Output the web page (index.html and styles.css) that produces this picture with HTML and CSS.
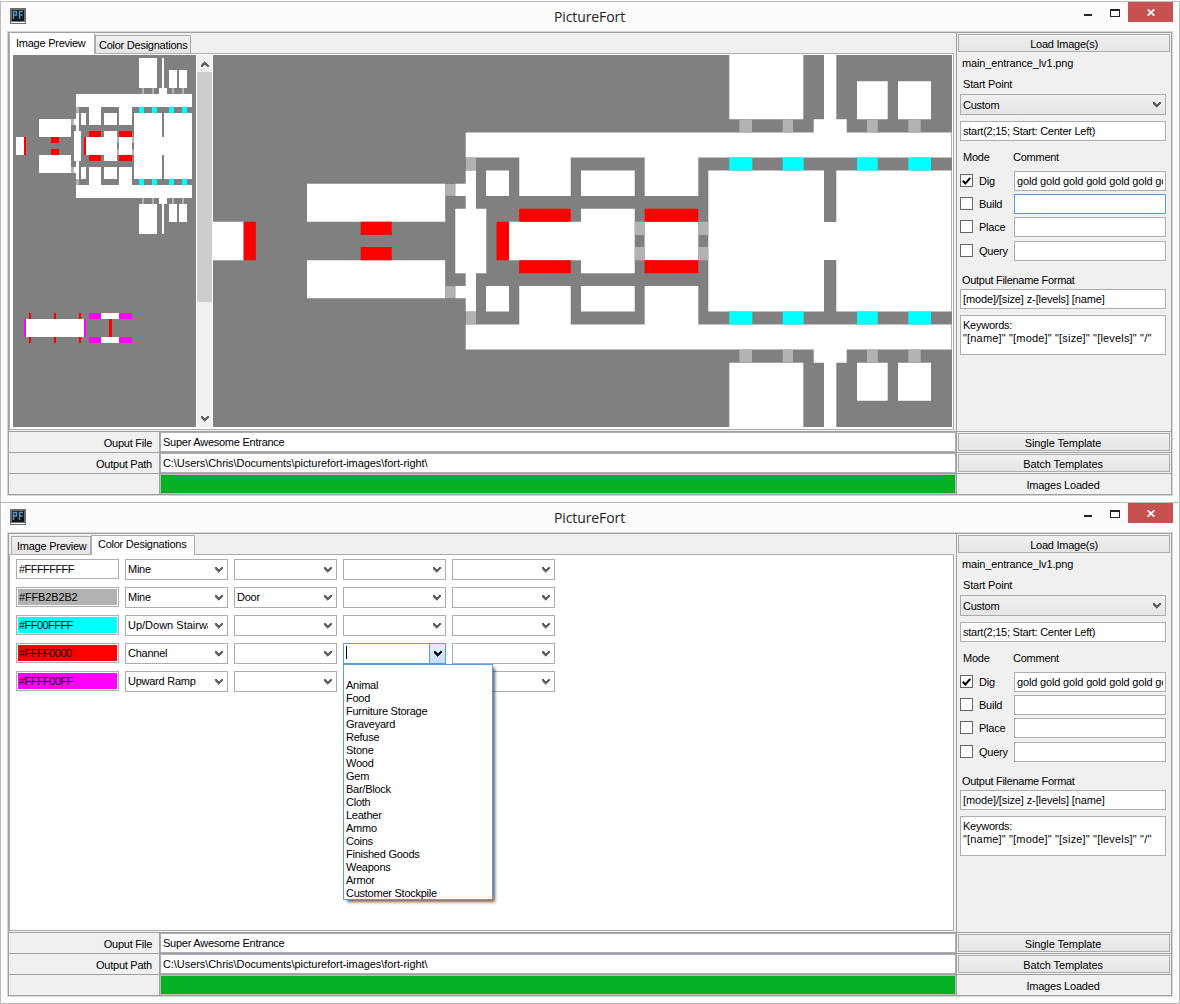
FILE: index.html
```html
<!DOCTYPE html>
<html lang="en">
<head>
<meta charset="utf-8">
<title>PictureFort</title>
<link rel="stylesheet" href="styles.css">
</head>
<body>
<svg class="defs" width="0" height="0">
  <symbol id="chev" viewBox="0 0 8 6"><path d="M0 0h2v1h1v1h2v-1h1v-1h2v2h-1v1h-1v1h-1v1h-1v1h-.5v-1h-1v-1h-1v-1h-1v-1h-.5z"/></symbol>
  <symbol id="logo" viewBox="0 0 16 16"><path d="M0 0h16v16H0z" fill="#6d6d6d"/><path d="M2 2h12v11H2z" fill="#10181f"/><path d="M1 14h14v1H1z" fill="#fff"/><path d="M3.500 11V3.500h3V7h-3M9.500 11V3.500H13M9.500 7H12.500" fill="none" stroke="#5c93b8" stroke-width="1.400"/></symbol>
  <symbol id="min" viewBox="0 0 8 2"><path d="M0 0h8v2H0z"/></symbol>
  <symbol id="max" viewBox="0 0 10 8"><path d="M0 0h10v8H0zM1 2v5h8V2z" fill-rule="evenodd"/></symbol>
  <symbol id="x" viewBox="0 0 8 7"><path d="M.7.3 7.300 6.700M7.300.3.700 6.700" stroke="#fff" stroke-width="1.700"/></symbol>
  <symbol id="tick" viewBox="0 0 9 8"><path d="M.8 3.800 3.300 6.500 8.300.8" fill="none" stroke="#000" stroke-width="2"/></symbol>
</svg>

<section class="window">
  <header class="titlebar">
    <svg class="logo"><use href="#logo"/></svg>
    <h1 class="title">PictureFort</h1>
    <div class="controls"><svg class="c-min"><use href="#min"/></svg><svg class="c-max"><use href="#max"/></svg><span class="close"><svg><use href="#x"/></svg></span></div>
  </header>
  <main class="client">
    <div class="tabs-cell">
      <nav class="tabs tabs-first"><span class="tab on">Image Preview</span><span class="tab">Color Designations</span></nav>
      <div class="panel preview">
        <svg class="thumb" viewBox="13 55 183 372" shape-rendering="crispEdges">
          <path fill="#808080" d="M13 55h183v372H13z"/>
          <g id="smallhalf">
            <path fill="#fff" d="M139 58h18v30h-18zM162 58h2v30h-2zM159 88h8v6h-8zM169 70h8v18h-8zM179 70h8v18h-8zM76 94h116v13H76zM89 107h12v18H89zM119 107h13v18h-13zM76 113h3v18h-3zM74 119h2v6h-2zM81 113h5v12h-5zM104 113h13v12h-13zM134 113h28v33h-28zM164 113h28v33h-28zM162 137h2v9h-2zM74 131h7v15h-7zM86 137h18v9H86zM104 131h13v15h-13zM119 137h13v9h-13zM39 119h32v18H39zM16 137h8v9h-8z"/>
            <path fill="#b2b2b2" d="M142 88h2v6h-2zM152 88h2v6h-2zM172 88h2v6h-2zM182 88h2v6h-2zM76 107h3v6h-3zM71 119h3v6h-3zM117 137h2v6h-2zM132 137h2v6h-2z"/>
            <path fill="#0ff" d="M139 107h5v6h-5zM152 107h5v6h-5zM169 107h5v6h-5zM182 107h5v6h-5z"/>
            <path fill="#f00" d="M89 131h12v6H89zM119 131h13v6h-13zM84 137h2v9h-2zM24 137h2v9h-2zM51 137h8v6h-8z"/>
          </g>
          <use href="#smallhalf" transform="matrix(1 0 0 -1 0 292)"/>
          <path fill="#fff" d="M26 319h58v18H26zM101 313h18v6h-18zM101 337h18v6h-18z"/>
          <path fill="#f0f" d="M24 319h2v18h-2zM84 319h2v18h-2zM89 313h12v6H89zM119 313h13v6h-13zM89 337h12v6H89zM119 337h13v6h-13z"/>
          <path fill="#f00" d="M29 313h2v6h-2zM54 313h2v6h-2zM79 313h2v6h-2zM29 337h2v6h-2zM54 337h2v6h-2zM79 337h2v6h-2zM109 319h3v18h-3z"/>
        </svg>
        <div class="scroll"><svg class="chev up"><use href="#chev"/></svg><span class="grip"></span><svg class="chev"><use href="#chev"/></svg></div>
        <svg class="big" viewBox="213 55 739 372">
          <path fill="#808080" d="M213 55h739v372H213z"/>
          <g id="bighalf">
            <path fill="#fff" d="M729.300 54h74v65.300h-74zM824 54h12.300v66H824zM813.700 119.300h33V133h-33zM857 81.300h30.700v38H857zM898 81.300h33v38h-33zM465.700 132.500H952v25H465.700zM519.300 157h51.400v39h-51.400zM644.700 157h53.600v39h-53.600zM465.700 170.500H476V209h-10.300zM455.300 183.700h11V196h-11zM455.300 208.700H486.300V241h-31zM486 170.500h23V196h-23zM581 170.500h53.700V196H581zM708.300 170.500H824V241H708.300zM836.300 170.500H952V241H836.300zM823.500 222h13.300v19h-13.300zM508.900 221.700h73V241h-73zM581 208.700h53.700V241H581zM644.600 221.700h53.700V241h-53.700zM307 183.700h138.200v38H307zM212 221.700h31.700V241H212z"/>
            <path fill="#b2b2b2" d="M739.300 119.600H752v12.800h-12.700zM782.700 119.600H793v12.800h-10.300zM867 119.600h10.700v12.800H867zM908.300 119.600h12.400v12.800h-12.400zM466 157.800h10v12.400h-10zM445.300 184h10v11.700h-10zM634.700 221.700h10V235h-10zM698.300 221.700h10V235h-10z"/>
            <path fill="#0ff" d="M729.300 157.600h23v12.800h-23zM782.700 157.600h21v12.800h-21zM857 157.600h20.700v12.800H857zM908.300 157.600H931v12.800h-22.700z"/>
            <path fill="#f00" d="M519.200 208.700h51.500v13h-51.500zM644.600 208.700h53.700v13h-53.700zM496.500 221.700H509V241h-12.500zM243.600 221.700h12.200V241h-12.200zM360.700 221.700h31V235h-31z"/>
          </g>
          <use href="#bighalf" transform="matrix(1 0 0 -1 0 482)"/>
          <path fill="#b0b0b0" d="M951 132.500h1v25h-1zM951 170.500h1v141h-1zM951 324.500h1v25h-1z"/>
        </svg>
      </div>
    </div>
    <aside class="side">
      <button class="btn load">Load Image(s)</button>
      <p class="file">main_entrance_lv1.png</p>
      <p class="lbl start">Start Point</p>
      <div class="select">Custom<svg class="chev"><use href="#chev"/></svg></div>
      <div class="field point">start(2;15; Start: Center Left)</div>
      <p class="lbl heads"><span>Mode</span><span>Comment</span></p>
      <div class="modes">
        <div class="mode"><i class="check"><svg><use href="#tick"/></svg></i><span class="name">Dig</span><div class="field gold"><span>gold gold gold gold gold gold gold</span></div></div>
        <div class="mode"><i class="check"></i><span class="name">Build</span><div class="field focus"></div></div>
        <div class="mode"><i class="check"></i><span class="name">Place</span><div class="field"></div></div>
        <div class="mode last"><i class="check"></i><span class="name">Query</span><div class="field"></div></div>
      </div>
      <p class="lbl fmt">Output Filename Format</p>
      <div class="field format">[mode]/[size] z-[levels] [name]</div>
      <div class="area">Keywords:<br><span class="keys">"[name]" "[mode]" "[size]" "[levels]" "/"</span></div>
    </aside>
    <div class="cell label">Ouput File</div><div class="cell input out1">Super Awesome Entrance</div><div class="cell"><button class="btn">Single Template</button></div>
    <div class="cell label">Output Path</div><div class="cell input out2">C:\Users\Chris\Documents\picturefort-images\fort-right\</div><div class="cell"><button class="btn">Batch Templates</button></div>
    <div class="cell"></div><div class="cell progress"></div><div class="cell status">Images Loaded</div>
  </main>
</section>

<section class="window bottom">
  <header class="titlebar">
    <svg class="logo"><use href="#logo"/></svg>
    <h1 class="title">PictureFort</h1>
    <div class="controls"><svg class="c-min"><use href="#min"/></svg><svg class="c-max"><use href="#max"/></svg><span class="close"><svg><use href="#x"/></svg></span></div>
  </header>
  <main class="client">
    <div class="tabs-cell">
      <nav class="tabs tabs-second"><span class="tab">Image Preview</span><span class="tab on">Color Designations</span></nav>
      <div class="panel colors">
        <div class="hex white">#FFFFFFFF</div><div class="combo"><span>Mine</span><svg class="chev"><use href="#chev"/></svg></div><div class="combo"><svg class="chev"><use href="#chev"/></svg></div><div class="combo"><svg class="chev"><use href="#chev"/></svg></div><div class="combo"><svg class="chev"><use href="#chev"/></svg></div>
        <div class="hex grey">#FFB2B2B2</div><div class="combo"><span>Mine</span><svg class="chev"><use href="#chev"/></svg></div><div class="combo"><span>Door</span><svg class="chev"><use href="#chev"/></svg></div><div class="combo"><svg class="chev"><use href="#chev"/></svg></div><div class="combo"><svg class="chev"><use href="#chev"/></svg></div>
        <div class="hex cyan">#FF00FFFF</div><div class="combo"><span class="stair">Up/Down Stairway</span><svg class="chev"><use href="#chev"/></svg></div><div class="combo"><svg class="chev"><use href="#chev"/></svg></div><div class="combo"><svg class="chev"><use href="#chev"/></svg></div><div class="combo"><svg class="chev"><use href="#chev"/></svg></div>
        <div class="hex red">#FFFF0000</div><div class="combo"><span>Channel</span><svg class="chev"><use href="#chev"/></svg></div><div class="combo"><svg class="chev"><use href="#chev"/></svg></div>
        <div class="combo open"><i class="caret"></i><b class="drop"><svg class="chev"><use href="#chev"/></svg></b>
          <ul class="menu"><li></li><li>Animal</li><li>Food</li><li>Furniture Storage</li><li>Graveyard</li><li>Refuse</li><li>Stone</li><li>Wood</li><li>Gem</li><li>Bar/Block</li><li>Cloth</li><li>Leather</li><li>Ammo</li><li>Coins</li><li>Finished Goods</li><li>Weapons</li><li>Armor</li><li>Customer Stockpile</li></ul>
        </div><div class="combo"><svg class="chev"><use href="#chev"/></svg></div>
        <div class="hex magenta">#FFFF00FF</div><div class="combo"><span>Upward Ramp</span><svg class="chev"><use href="#chev"/></svg></div><div class="combo"><svg class="chev"><use href="#chev"/></svg></div><div class="combo"><svg class="chev"><use href="#chev"/></svg></div><div class="combo"><svg class="chev"><use href="#chev"/></svg></div>
      </div>
    </div>
    <aside class="side">
      <button class="btn load">Load Image(s)</button>
      <p class="file">main_entrance_lv1.png</p>
      <p class="lbl start">Start Point</p>
      <div class="select">Custom<svg class="chev"><use href="#chev"/></svg></div>
      <div class="field point">start(2;15; Start: Center Left)</div>
      <p class="lbl heads"><span>Mode</span><span>Comment</span></p>
      <div class="modes">
        <div class="mode"><i class="check"><svg><use href="#tick"/></svg></i><span class="name">Dig</span><div class="field gold"><span>gold gold gold gold gold gold gold</span></div></div>
        <div class="mode"><i class="check"></i><span class="name">Build</span><div class="field"></div></div>
        <div class="mode"><i class="check"></i><span class="name">Place</span><div class="field"></div></div>
        <div class="mode last"><i class="check"></i><span class="name">Query</span><div class="field"></div></div>
      </div>
      <p class="lbl fmt">Output Filename Format</p>
      <div class="field format">[mode]/[size] z-[levels] [name]</div>
      <div class="area">Keywords:<br><span class="keys">"[name]" "[mode]" "[size]" "[levels]" "/"</span></div>
    </aside>
    <div class="cell label">Ouput File</div><div class="cell input out1">Super Awesome Entrance</div><div class="cell"><button class="btn">Single Template</button></div>
    <div class="cell label">Output Path</div><div class="cell input out2">C:\Users\Chris\Documents\picturefort-images\fort-right\</div><div class="cell"><button class="btn">Batch Templates</button></div>
    <div class="cell"></div><div class="cell progress"></div><div class="cell status">Images Loaded</div>
  </main>
</section>
</body>
</html>
```

FILE: styles.css
```css
* { box-sizing: border-box; margin: 0; padding: 0; }
html { background: #fff; }
body { width: 1180px; padding-top: 1px; font: 11px/13px "Liberation Sans", Arial, sans-serif; letter-spacing: -.25px; color: #000; overflow: hidden; }
svg { display: block; flex: none; }
.defs { position: absolute; }
.window { height: 501px; background: #fcfcfc; border: 1px solid #bbb; border-bottom: 0; padding: 0 6px; }
.window.bottom { height: 502px; border-bottom: 1px solid #bbb; }

.titlebar { display: grid; grid-template-columns: 1fr auto 1fr; height: 29px; padding-left: 3px; }
.logo { width: 16px; height: 16px; margin-top: 6px; }
.title { font: 400 14px/19px "Open Sans", sans-serif; letter-spacing: -.1px; margin: 5px 4px 0 0; color: #222; }
.controls { display: flex; justify-content: flex-end; }
.c-min { width: 8px; height: 2px; margin: 12px 18px 0 0; fill: #222; }
.c-max { width: 10px; height: 8px; margin: 7px 8px 0 0; fill: #222; }
.close { width: 45px; height: 20px; background: #c75050; display: flex; align-items: center; justify-content: center; padding-top: 1px; }
.close svg { width: 8px; height: 7px; }

.client { display: grid; grid-template: 398px repeat(3, 20px) / 150px 796px 214px; gap: 1px; width: 1166px; height: 465px; padding: 1px; border: 1px solid #d6d6d6; background: #a0a0a0; }
.tabs-cell { grid-column: span 2; background: #f0f0f0; }
.tabs { display: flex; height: 21px; align-items: flex-end; margin-bottom: -1px; }
.tab { position: relative; height: 19px; border: 1px solid #acacac; background: linear-gradient(#f0f0f0, #e5e5e5); padding: 3px 0 0 3px; white-space: nowrap; }
.tab.on { height: 20px; background: #fff; border-bottom: 0; padding-top: 2px; }
.tabs-first .on { width: 86px; padding: 3px 0 0 6px; height: 21px; border-top-color: #fff; }
.tabs-first .tab:last-child { width: 96px; }
.tabs-second .tab:first-child { margin-left: 2px; width: 80px; padding-left: 5px; }
.tabs-second .on { width: 104px; padding-left: 6px; }
.panel { width: 945px; height: 377px; background: #fff; border: 1px solid #acacac; }

.preview { display: flex; gap: 1px; padding: 1px 1px 2px 3px; }
.thumb { width: 183px; height: 372px; }
.big { width: 739px; height: 372px; }
.scroll { width: 15px; height: 372px; background: #f0f0f0; display: flex; flex-direction: column; align-items: center; }
.grip { width: 15px; height: 230px; background: #cdcdcd; margin: 5px 0 114px; }
.chev { width: 8px; height: 6px; fill: #606060; }
.chev.up { transform: scaleY(-1); margin-top: 6px; }

.colors { display: grid; grid-template-columns: repeat(5, 103px); grid-auto-rows: 21px; gap: 7px 6px; align-content: start; padding: 4px 6px; }
.hex { height: 20px; border: 1px solid #abadb3; background: #fff content-box; padding: 1px; line-height: 16px; text-indent: 1px; letter-spacing: -.55px; }
.hex.grey { background-color: #b2b2b2; letter-spacing: -.15px; }
.hex.cyan { background-color: #0ff; }
.hex.red { background-color: #f00; }
.hex.magenta { background-color: #f0f; }
.combo { position: relative; display: flex; align-items: center; border: 1px solid #acacac; background: #fff; padding: 0 4px 0 2px; }
.combo span { width: 80px; overflow: hidden; white-space: nowrap; }
.combo .stair { letter-spacing: 0; }
.combo > .chev { margin-left: auto; }
.combo.open { border-color: #569de5; padding: 0; }
.caret { width: 1px; height: 13px; margin: -2px 0 0 2px; background: #000; }
.drop { display: flex; align-items: center; justify-content: center; width: 16px; height: 19px; margin-left: auto; border-left: 1px solid #569de5; background: linear-gradient(#e3f0fc, #c4dffa); }
.drop .chev { fill: #000; }
.menu { position: absolute; z-index: 2; left: -1px; top: 20px; width: 150px; height: 236px; list-style: none; background: #fff; border: 1px solid #569de5; padding-left: 2px; box-shadow: 3px 3px 3px -1px #0009; }
.menu li { height: 13px; line-height: 14px; }

.side { background: #f0f0f0; padding: 1px 4px 0 3px; }
.btn { display: block; width: 212px; height: 18px; overflow: hidden; border: 1px solid #acacac; background: linear-gradient(#f0f0f0, #e5e5e5); font: inherit; letter-spacing: -.1px; line-height: 18px; color: #000; text-align: center; padding-right: 2px; }
.btn.load { letter-spacing: -.25px; margin-left: -2px; padding-right: 0; }
.cell .btn { margin: 1px; }
.file { margin: 5px 0 0 2px; letter-spacing: -.15px; }
.lbl { padding-left: 3px; }
.start { margin-top: 8px; letter-spacing: -.2px; }
.select { display: flex; justify-content: space-between; align-items: center; width: 206px; height: 21px; margin-top: 3px; padding: 1px 4px 0 2px; border: 1px solid #acacac; background: linear-gradient(#f0f0f0, #e5e5e5); }
.field { height: 20px; border: 1px solid #abadb3; background: #fff; padding-left: 2px; line-height: 18px; white-space: nowrap; overflow: hidden; }
.field.focus { border-color: #569de5; }
.point { width: 206px; margin-top: 6px; }
.heads { display: grid; grid-template-columns: 50px 1fr; margin: 10px 0 7px; }
.modes { display: grid; gap: 3px; }
.mode { display: grid; grid-template-columns: 19px 35px 152px; align-items: center; }
.mode.last { margin-top: 1px; }
.check { width: 13px; height: 13px; border: 1px solid #666; background: #fff; padding: 2px 1px; margin-top: -1px; }
.check svg { width: 9px; height: 8px; }
.gold { padding: 0 2px; letter-spacing: -.16px; }
.gold span { display: block; overflow: hidden; }
.fmt { margin: 13px 0 2px; padding-left: 2px; letter-spacing: -.3px; }
.format { width: 206px; letter-spacing: -.12px; }
.area { width: 206px; height: 40px; margin-top: 6px; padding: 3px 0 0 2px; border: 1px solid #abadb3; background: #fff; white-space: nowrap; }
.keys { letter-spacing: .17px; }

.cell { background: #f0f0f0; }
.label { text-align: right; padding: 5px 7px 0 0; }
.input { border: 1px solid #abadb3; background: #fff; padding: 3px 0 0 2px; white-space: nowrap; line-height: 12px; }
.out2 { letter-spacing: -.07px; }
.progress { background: #06b025; border: 1px solid #bcbcbc; }
.status { text-align: center; padding: 5px 2px 0 0; letter-spacing: -.2px; }
```
